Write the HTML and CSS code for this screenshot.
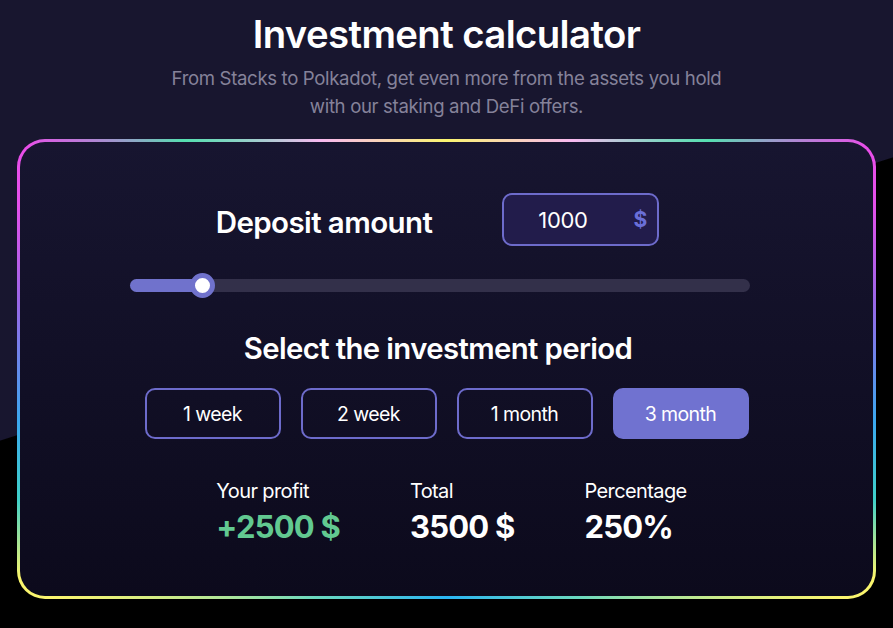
FILE: index.html
```html
<!DOCTYPE html>
<html lang="en">
<head>
<meta charset="utf-8">
<title>Investment calculator</title>
<link rel="stylesheet" href="styles.css">
</head>
<body>
<main class="page">
  <header class="intro">
    <h1 class="title">Investment calculator</h1>
    <p class="subtitle">From Stacks to Polkadot, get even more from the assets you hold<br>with our staking and DeFi offers.</p>
  </header>
  <section class="card">
    <div class="deposit-row">
      <h2 class="deposit-label">Deposit amount</h2>
      <div class="amount-box">
        <span class="amount-value">1000</span>
        <span class="amount-currency">$</span>
      </div>
    </div>
    <div class="slider">
      <div class="slider-fill" style="width: 72px"></div>
      <div class="slider-thumb" style="left: 72px"></div>
    </div>
    <h2 class="period-title">Select the investment period</h2>
    <div class="periods">
      <button class="period">1 week</button>
      <button class="period">2 week</button>
      <button class="period">1 month</button>
      <button class="period period-active">3 month</button>
    </div>
    <div class="stats">
      <div class="stat">
        <div class="stat-label">Your profit</div>
        <div class="stat-value stat-green">+2500 $</div>
      </div>
      <div class="stat">
        <div class="stat-label">Total</div>
        <div class="stat-value">3500 $</div>
      </div>
      <div class="stat">
        <div class="stat-label">Percentage</div>
        <div class="stat-value">250%</div>
      </div>
    </div>
  </section>
</main>
</body>
</html>
```
FILE: styles.css
```css
* { box-sizing: border-box; }
html, body { margin: 0; padding: 0; }
body {
  font-family: "Inter", "Noto Sans", sans-serif;
  color: #ffffff;
  background: #000;
}
.page {
  width: 893px;
  height: 628px;
  overflow: hidden;
  padding: 0 17px;
  background: linear-gradient(162.4deg, #18162f 419.5px, #000000 420.5px);
}
.intro {
  text-align: center;
  padding-top: 10px;
}
.title {
  margin: 0;
  font-size: 38.3px;
  font-weight: 600;
  line-height: 48px;
  letter-spacing: -0.6px;
}
.subtitle {
  margin: 6px 0 0;
  font-size: 18.6px;
  line-height: 28px;
  color: #85829a;
  letter-spacing: -0.35px;
}
.card {
  margin-top: 19px;
  height: 460px;
  border: 3px solid transparent;
  border-radius: 28px;
  background:
    linear-gradient(180deg, #171530 0%, #0c0a1c 100%) padding-box,
    conic-gradient(from 0deg at 50% 50%,
      #fbf56f 0deg, #f8b9f0 29deg, #55dfb0 49deg, #e94ee9 62deg, #e450ea 69deg,
      #9a67e8 81deg, #3ba8ef 97deg, #3fd0c9 107deg, #f9f56c 116deg, #fbf56f 120deg,
      #6ad9c0 150deg, #2ab6f4 180deg, #6ad9c0 210deg, #fbf56f 240deg, #f9f56c 244deg,
      #3fd0c9 253deg, #3ba8ef 263deg, #9a67e8 279deg, #e450ea 291deg, #e94ee9 298deg,
      #55dfb0 311deg, #f8b9f0 331deg, #fbf56f 360deg) border-box;
  display: flex;
  flex-direction: column;
  align-items: center;
  padding-top: 51px;
}
.deposit-row {
  display: flex;
  align-items: center;
  gap: 70px;
  margin-right: 18px;
}
.deposit-label {
  margin: 0;
  font-size: 29.5px;
  line-height: 36px;
  font-weight: 600;
  letter-spacing: -0.6px;
  position: relative;
  top: 2px;
}
.amount-box {
  width: 157px;
  height: 53px;
  border: 2px solid #6d6bcb;
  border-radius: 10px;
  background: #221c4b;
  display: flex;
  align-items: center;
  padding: 0 10px 0 34px;
  justify-content: space-between;
}
.amount-value {
  font-size: 22px;
  letter-spacing: -0.3px;
}
.amount-currency {
  font-size: 21px;
  font-weight: 700;
  color: #6a6fd8;
}
.slider {
  position: relative;
  margin-top: 33px;
  margin-right: 13px;
  width: 620px;
  height: 13px;
  border-radius: 7px;
  background: #33304a;
}
.slider-fill {
  height: 100%;
  border-radius: 7px;
  background: #7072cc;
}
.slider-thumb {
  position: absolute;
  top: 50%;
  width: 25px;
  height: 25px;
  margin: -12.5px 0 0 -12.5px;
  border-radius: 50%;
  background: #fff;
  border: 5px solid #7072cc;
}
.period-title {
  margin: 40px 17px 0 0;
  font-size: 29.3px;
  line-height: 34px;
  font-weight: 600;
  letter-spacing: -0.6px;
}
.periods {
  display: flex;
  gap: 20px;
  margin-top: 22px;
}
.period {
  width: 136px;
  height: 51px;
  border: 2px solid #6d6bcb;
  border-radius: 10px;
  background: transparent;
  color: #fff;
  font-family: inherit;
  font-size: 19.5px;
  letter-spacing: -0.6px;
  cursor: pointer;
}
.period-active {
  background: #7072d0;
  border-color: #7072d0;
}
.stats {
  display: flex;
  gap: 70px;
  margin-top: 40px;
  margin-left: 10px;
}
.stat-label {
  font-size: 20px;
  line-height: 24px;
  letter-spacing: -0.6px;
}
.stat-value {
  margin-top: 5px;
  font-size: 31px;
  line-height: 38px;
  font-weight: 700;
  letter-spacing: -0.8px;
}
.stat-green { color: #62c991; }
```
